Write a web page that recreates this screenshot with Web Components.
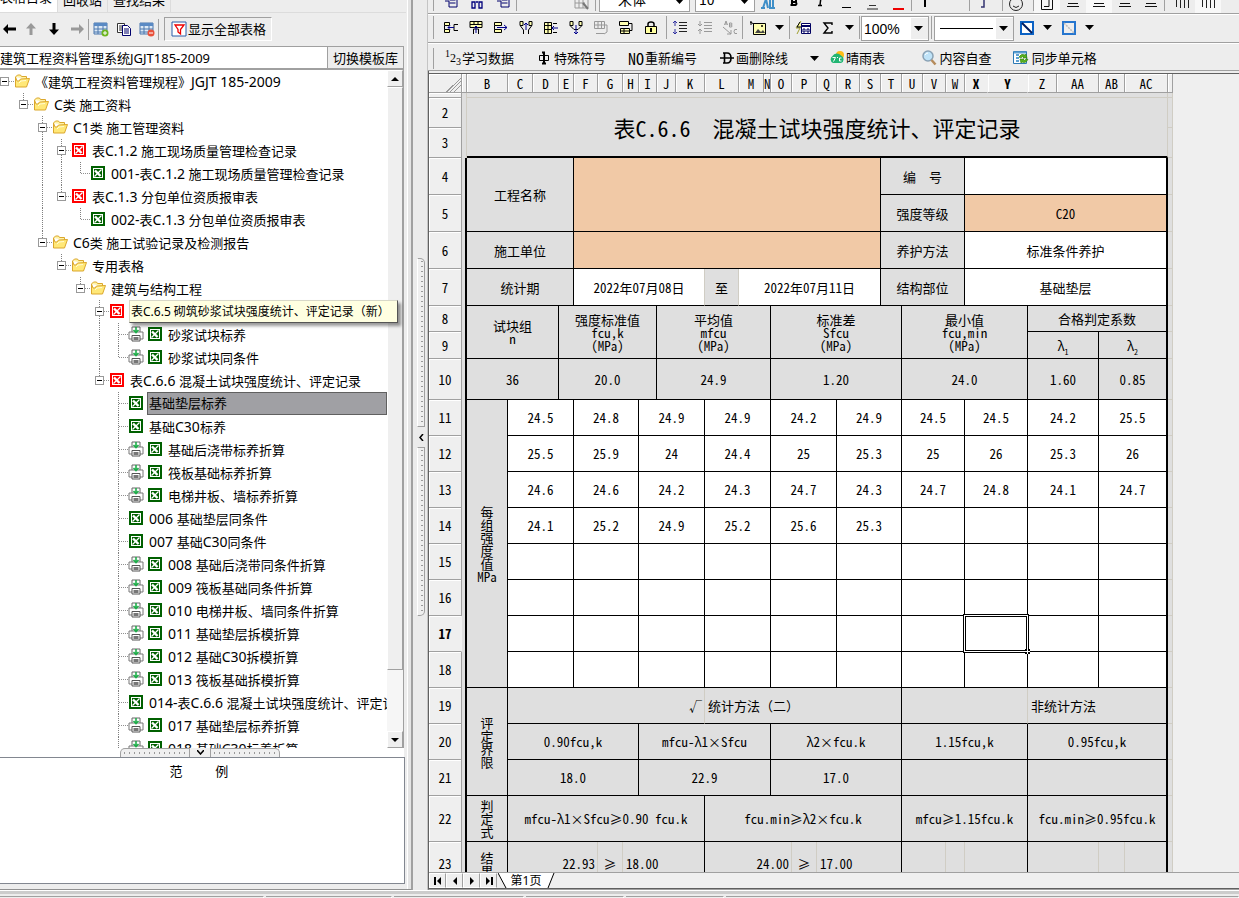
<!DOCTYPE html>
<html lang="zh-CN">
<head>
<meta charset="utf-8">
<title>建筑工程资料管理系统</title>
<style>
html, body { margin: 0; height: 100%; }
body {
  --face: #efefef; --line: #a0a0a0; --sheet: #dfdfdf;
  background: #ededed; color: #000; overflow: hidden;
  font: 13px/16px "Noto Sans", "Noto Sans CJK SC", sans-serif;
}
</style>
</head>
<body>
<app-shell></app-shell>
<script>
const ICONS = {
  left: '<path d="M1 8l5-5v3.500h8v3H6V13z" fill="#000"/>',
  up: '<path d="M8 2l5 5.500H9.500V14h-3V7.500H3z" fill="#999"/>',
  down: '<path d="M8 14l5-5.500H9.500V2h-3v6.500H3z" fill="#000"/>',
  right: '<path d="M15 8l-5-5v3.500H2v3h8V13z" fill="#999"/>',
  tadd: '<path d="M1 2h13v11H1z" fill="#dce9f6" stroke="#4a76ad"/><path d="M1 2h13v3H1z" fill="#5a8ac4"/><path d="M1 8h13M1 11h13M5 5v8M10 5v8" stroke="#4a76ad"/><circle cx="12" cy="12" r="3.500" fill="#6db51f"/><path d="M10 12h4M12 10v4" stroke="#fff"/>',
  tdel: '<path d="M1 2h13v11H1z" fill="#dce9f6" stroke="#4a76ad"/><path d="M1 2h13v3H1z" fill="#5a8ac4"/><path d="M1 8h13M1 11h13M5 5v8M10 5v8" stroke="#4a76ad"/><circle cx="12" cy="12" r="3.500" fill="#e8503a"/><path d="M10 12h4" stroke="#fff"/>',
  copy: '<path d="M1.500 2.500h7v9h-7z" fill="#fff" stroke="#333"/><path d="M3 5h4M3 7h3M3 9h3" stroke="#333"/><path d="M6.500 4.500h5l3 3v7h-8z" fill="#fff" stroke="#00006c"/><path d="M8 8h5M8 10h5M8 12h5" stroke="#00006c"/>',
  funnel: '<path d="M1 1h14v14H1z" fill="#fff" stroke="#2a5ca8"/><path d="M4 4h9l-3.500 4.500V13L7 11V8.500z" fill="none" stroke="#e00" stroke-width="1.300"/>',
  folder: '<path d="M1.500 4l2-2h3l1 1.500h5V6" fill="#fff3a6" stroke="#dba72c"/><path d="M1.500 4v10h11l3-8.500-9 .5-1.500 2H3z" fill="#ffe878" stroke="#dba72c"/><path d="M5 10l2-2 5-.500" fill="none" stroke="#fffbd4"/>',
  printer: '<path d="M4 6V1h8v5" fill="#fff" stroke="#666"/><path d="M1 6h14v7H1z" fill="#fff" stroke="#777"/><path d="M4 9.500h8V15H4z" fill="#fff" stroke="#555"/><path d="M5.500 12.500h5" stroke="#777" stroke-width="3"/><path d="M8 1v5M5.500 4L8 6.500 10.500 4" fill="none" stroke="#1fae4a" stroke-width="1.600"/>',
  i1: '<path d="M1.500 2.500h5v3h-5zM1.500 9.500h5v3h-5z" fill="#ffffb0" stroke="#000"/><path d="M1.500 5.500v4M15 4.500h-4v6h4" fill="none" stroke="#000"/><path d="M11 7.500H5M7 5.500l-2 2 2 2" fill="none" stroke="#00008b"/>',
  i2: '<path d="M2 1.500h12v6H2zM2 4.500h12M6 1.500v3M10 1.500v3" fill="#ffffb0" stroke="#000"/><path d="M5.500 14V9h5v5" fill="none" stroke="#000"/><path d="M8 13V6M6 8l2-2 2 2" fill="none" stroke="#00008b"/>',
  i3: '<path d="M1.500 2.500h7v3h-7zM1.500 9.500h7v3h-7z" fill="#ffffb0" stroke="#000"/><path d="M1.500 5.500v4" stroke="#000"/><path d="M4 7.500h10M11 5l3 2.500L11 10" fill="none" stroke="#00008b"/>',
  i4: '<path d="M2 1.500h3v4H2zM11 1.500h3v4h-3z" fill="#ffffb0" stroke="#000"/><path d="M5.500 14v-4l-3-4M10.500 14v-4l3-4" fill="none" stroke="#000"/><path d="M8 10V3M6 5l2-2 2 2" fill="none" stroke="#00008b"/>',
  i5: '<path d="M1.500 2.500h7v11h-7zM1.500 5.500h7M1.500 9.500h7M5 2.500v11" fill="#ffffb0" stroke="#000"/><path d="M10 3.500h4M10 12.500h4" stroke="#000"/><path d="M15 8H9M11 6L9 8l2 2" fill="none" stroke="#00008b"/>',
  i6: '<path d="M2 1.500h3v4H2zM11 1.500h3v4h-3z" fill="#ffffb0" stroke="#000"/><path d="M2 5.500l4 4h4l4-4" fill="none" stroke="#000"/><path d="M8 5v9M6 12l2 2 2-2" fill="none" stroke="#00008b"/>',
  i7: '<path d="M1.500 1.500h10v7h-10zM1.500 5h10M5 1.500v7M8.500 1.500v7" fill="none" stroke="#999"/><path d="M3 13.500h8M12 5h2v7l-3 2" fill="none" stroke="#999"/>',
  i8: '<path d="M1.500 1.500h9v4h-9zM2.500 8.500h9v5h-9z" fill="#ffffb0" stroke="#000"/><path d="M6 8.500v5M2.500 11h9M11 3.500h3v7h-2" fill="none" stroke="#000"/>',
  lock: '<path d="M5 7V4q0-2 3-2t3 2v3" fill="none" stroke="#000" stroke-width="1.500"/><path d="M2.500 6.500h11v7h-11z" fill="#ffffa0" stroke="#000"/><path d="M8 8v4" stroke="#000" stroke-width="2"/>',
  ls1: '<path d="M7 2.500h8M7 5.500h8M7 8.500h8M7 11.500h8" stroke="#222"/><path d="M3 1v5M1 3l2-2 2 2M3 9v5M1 12l2 2 2-2" fill="none" stroke="#3030a0"/>',
  ls2: '<path d="M7 2.500h8M7 5.500h8M7 8.500h8M7 11.500h8" stroke="#999"/><path d="M3 1v5M1 4l2 2 2-2M3 9v5M1 11l2-2 2 2" fill="none" stroke="#999"/>',
  abc: '<path d="M1 7l8 7M9 10v4H5" fill="none" stroke="#999"/><path d="M2.500 5L4 1l1.500 4M3 4h2M7.500 3v4h2q1-1 0-2 1-1 0-2zM7.500 5h2M15 9.500q-3-1-3 2t3 2" fill="none" stroke="#999"/>',
  pic: '<path d="M3.500 3.500h12v11h-12z" fill="#ffffb0" stroke="#000"/><path d="M5 13l3-4 3 3 2-2 2 3z" fill="#444"/><path d="M0 2l4 2M1 1v4" stroke="#000"/><circle cx="12" cy="6" r="1" fill="#000"/>',
  calc: '<path d="M6.500 3.500h9v10h-9z" fill="#fff" stroke="#000060"/><path d="M6.500 6h9" stroke="#000060" stroke-width="2"/><path d="M8 9h2v3H8zM12 9h2v3h-2z" fill="none" stroke="#000060"/><path d="M6 1L1 8h4l-3 6" fill="none" stroke="#a0a030"/><path d="M5 2L2 7h4" fill="#ffff90" stroke="#000"/>',
  sigma: '<path d="M12 5V3H4l4 5-4 5h8v-2" fill="none" stroke="#000" stroke-width="1.400"/>',
  diag1: '<path d="M2 2h12v12H2z" fill="#fff" stroke="#0b62c4" stroke-width="2"/><path d="M3 3l10 10" stroke="#001a5c" stroke-width="2"/>',
  diag2: '<path d="M2 2h12v12H2z" fill="#eee" stroke="#2676cf" stroke-width="2"/><path d="M3 3l10 10" stroke="#bbb" stroke-width="1.500" stroke-dasharray="2 1"/>',
  phi: '<path d="M3.500 5.500h9v5h-9z" fill="none" stroke="#000"/><path d="M8 2v12M6 2.500h3M6 13.500h4" stroke="#000" stroke-width="2"/>',
  strike: '<path d="M4 3h4q4 0 4 5t-4 5H4M5.500 3v10" fill="none" stroke="#000" stroke-width="1.600"/><path d="M1 8h14" stroke="#000" stroke-width="1.500"/>',
  weather: '<circle cx="11" cy="5" r="4" fill="#ffbd16"/><path d="M4 13a4 4 0 01-.500-7A5 4.500 0 0112 5.500 4 4 0 0112 13z" fill="#22b573"/><path d="M3.500 7.500h3l-2 4M8.500 7v1M12.500 8h-2v3h2" fill="none" stroke="#fff"/>',
  search: '<circle cx="7" cy="6" r="5" fill="#bfe3f8" stroke="#8aa2b5" stroke-width="1.500"/><path d="M4 5q1-2 3-2" stroke="#fff" fill="none"/><path d="M10.500 10l4 4.500" stroke="#b58b5c" stroke-width="2.500"/>',
  sync: '<path d="M.500 1.500h13v12H.500z" fill="#fff" stroke="#2d7ab5"/><path d="M1 2.500h12M3 5h3M3 8h3M3 11h3" stroke="#5da0d2" stroke-width="2"/><path d="M6 7q2-4 6-2l1-1 1 4h-4l1-1q-2-1-3 1zM15 9q-2 5-6 3l-1 1-1-4h4l-1 1q2 1 3-1z" fill="#58b31c" stroke="#2c7a0c" stroke-width=".6"/>',
  doc: '<path d="M2 4h4v6h8V2H4" fill="none" stroke="#00006c"/><path d="M6.500 3h6M6.500 6h6" stroke="#00006c"/>',
  bino: '<path d="M3 5h3v6H3zM10 5h3v6h-3zM7 5h2" fill="none" stroke="#00007c" stroke-width="1.300"/>',
  grid: '<path d="M1 2h13v9H1zM1 6h10M5 2v9M9 2v9" fill="none" stroke="#999"/><path d="M9 6l5 6" stroke="#777" stroke-width="2"/>',
  aa: '<path d="M1 11h4M3 11L6 2l2 9M9 11h6M10 11V2h3v9" fill="none" stroke="#3f8fc8" stroke-width="2"/>',
  bold: '<path d="M5 1h5v4H6M6 1v7M4.500 8h5q2-1 0-3" fill="none" stroke="#000" stroke-width="2"/>',
  ital: '<path d="M9 0L8 8M6 8.500h4" stroke="#000" stroke-width="1.500"/>',
  under: '<path d="M4 10.500h9" stroke="#000"/>',
  ugrey: '<path d="M3 12h11" stroke="#888" stroke-width="2"/><path d="M5 8.500h7" stroke="#333"/>',
  ured: '<path d="M3 12h11" stroke="#e00" stroke-width="2"/>',
  tick: '<path d="M8 2v8" stroke="#000" stroke-width="2"/>',
  hook: '<path d="M9 2v8H6" fill="none" stroke="#333370" stroke-width="1.500"/>',
  face: '<circle cx="8" cy="7" r="6.500" fill="none" stroke="#222"/><path d="M5 9q3 3 6 0" fill="none" stroke="#222"/>',
  box: '<path d="M2.500 2.500h11v10h-11zM5 9.500h5V3" fill="none" stroke="#111"/>',
  lines: '<path d="M3 6.500h10M2 9.500h12" stroke="#111"/>',
  comb: '<path d="M2.500 2v8M6.500 2v9M10.500 2v9M14.500 2v9" stroke="#222"/>'
};
const icon = (n, w = 16) => `<svg width="${w}" height="${w}" viewBox="0 0 16 16" aria-hidden="true">${ICONS[n]}</svg>`;
const TRI = '<svg class="tri" width="9" height="5" viewBox="0 0 9 5" aria-hidden="true"><path d="M0 0h9L4.500 5z"/></svg>';
/* Latin runs are set one pixel larger than the Chinese text beside them. */
const mix = s => s.replace(/[A-Za-z0-9.\-][A-Za-z0-9.\- ]*/g, m => `<span class="n">${m}</span>`);

function define(name, html) {
  const t = document.createElement('template');
  t.innerHTML = html;
  customElements.define(name, class extends HTMLElement {
    constructor() {
      super();
      this.attachShadow({ mode: 'open' }).append(t.content.cloneNode(true));
    }
  });
}
const BASE = `:host,*{box-sizing:border-box} svg{display:block;flex:none} button{font:inherit;color:inherit;background:none;border:0;padding:0;margin:0}.n{font-size:14px}`;

/* ---- left side ---- */
define('nav-tabs', `<style>${BASE}
:host{display:flex;align-items:flex-end;height:13px;overflow:hidden;border-bottom:1px solid #dcdcdc;flex:none}
button{height:26px;padding:4px 5px 2px;border-right:1px solid #dcdcdc;line-height:16px;white-space:nowrap}
button[aria-selected=true]{background:#fff;padding:0 5px 7px 0;margin-bottom:-1px}
</style><button role="tab" aria-selected="true">表格目录</button><button role="tab">回收站</button><button role="tab">查找结果</button>`);

define('nav-tools', `<style>${BASE}
:host{display:flex;align-items:center;height:33px;padding:0 0 1px 0;flex:none}
button{width:23px;display:flex;justify-content:center}
i{width:1px;height:21px;background:#a0a0a0}
.all{width:auto;margin-left:5px;height:24px;border:1px solid #a0a0a0;border-right-color:#fff;border-bottom-color:#fff;padding:0 5px 0 6px;align-items:center;gap:1px;white-space:nowrap}
</style><button style="width:19px" aria-label="后退">${icon('left')}</button><button aria-label="上移">${icon('up')}</button><button aria-label="下移">${icon('down')}</button><button aria-label="前进">${icon('right')}</button><i></i><button aria-label="新增">${icon('tadd')}</button><button aria-label="复制">${icon('copy')}</button><button aria-label="删除">${icon('tdel')}</button><i></i><button class="all">${icon('funnel')}<span>显示全部表格</span></button>`);

define('library-bar', `<style>${BASE}
:host{display:flex;height:23px;border:1px solid #a0a0a0;border-left:0;flex:none;margin:0 2px 0 0}
input{flex:1;min-width:0;border:0;padding:0;font:inherit;background:#fff;outline:0}
button{width:76px;border-left:1px solid #a0a0a0;white-space:nowrap}
</style><input aria-label="模板库" value="建筑工程资料管理系统JGJT185-2009"><button>切换模板库</button>`);

const TREE = [
  [0,'f','《建筑工程资料管理规程》JGJT 185-2009'],[1,'f','C类 施工资料'],[2,'f','C1类 施工管理资料'],
  [3,'r','表C.1.2 施工现场质量管理检查记录'],[4,'g','001-表C.1.2 施工现场质量管理检查记录'],
  [3,'r','表C.1.3 分包单位资质报审表'],[4,'g','002-表C.1.3 分包单位资质报审表'],
  [2,'f','C6类 施工试验记录及检测报告'],[3,'f','专用表格'],[4,'f','建筑与结构工程'],
  [5,'r',''],[6,'p','砂浆试块标养'],[6,'p','砂浆试块同条件'],
  [5,'r','表C.6.6 混凝土试块强度统计、评定记录'],[6,'s','基础垫层标养'],[6,'g','基础C30标养'],
  [6,'p','基础后浇带标养折算'],[6,'p','筏板基础标养折算'],[6,'p','电梯井板、墙标养折算'],
  [6,'g','006 基础垫层同条件'],[6,'g','007 基础C30同条件'],[6,'p','008 基础后浇带同条件折算'],
  [6,'p','009 筏板基础同条件折算'],[6,'p','010 电梯井板、墙同条件折算'],[6,'p','011 基础垫层拆模折算'],
  [6,'p','012 基础C30拆模折算'],[6,'p','013 筏板基础拆模折算'],
  [6,'g','014-表C.6.6 混凝土试块强度统计、评定记录'],[6,'p','017 基础垫层标养折算'],[6,'p','018 基础C30标养折算']
];
const follows = (i, l) => { for (let j = i + 1; j < TREE.length && TREE[j][0] >= l; j++) if (TREE[j][0] === l) return true; return false; };
const sheetIcon = c => `<svg class="x" width="14" height="14" viewBox="0 0 14 14" aria-hidden="true"><path d="M0 0h14v14H0z" fill="${c}"/><path d="M2 2h10v10H2z" fill="#fff"/><path d="M3 3h8v8H3z" fill="${c}"/><path d="M4 4.500l5.500 5.500" stroke="#fff" stroke-width="2.400"/><path d="M10.500 3.500L3.500 10.500" stroke="#fff" stroke-width="1.300"/></svg>`;
const treeRow = ([lv, k, text], i) => {
  let guides = '';
  for (let l = 0; l <= lv; l++) {
    const own = l === lv, next = follows(i, l);
    guides += `<span class="g${own && l ? ' top' : ''}${next ? ' down' : ''}${own ? ' own' : ''}">${own && 'fr'.includes(k) ? '<b></b>' : ''}</span>`;
  }
  const pic = k === 'f' ? icon('folder') : k === 'r' ? sheetIcon('#f00') : (k === 'p' ? icon('printer') : '') + sheetIcon('#006000');
  return `<li role="treeitem" class="${k}">${guides}<span class="pic">${pic}</span><span class="t">${mix(text)}</span></li>`;
};
define('tool-tip', `<style>:host{display:block;background:#ffffe1;border:1px solid #d8d8c8;border-right-color:#555;border-bottom-color:#555;box-shadow:3px 3px 3px #0006;padding:2px 7px 2px 1px;font-size:12px;line-height:17px;white-space:nowrap}</style><slot></slot>`);

define('doc-tree', `<style>${BASE}
:host{display:flex;flex:1;min-height:0;background:#fff;border:1px solid #a0a0a0;border-width:1px 1px 0 0;margin-right:2px;position:relative}
tool-tip{position:absolute;left:129px;top:230px;z-index:2}
.view{flex:1;min-width:0;overflow:hidden;position:relative}
ul{list-style:none;margin:0;padding:0;position:absolute;inset:0 0 0 0;overflow:hidden}
li{display:flex;align-items:center;height:23px;white-space:nowrap}
.g{width:19px;height:23px;flex:none;position:relative}
.g.top::before,.g.down::after{content:"";position:absolute;left:4px;border-left:1px dotted #808080;top:0;height:11px}
.g.down::after{height:23px}
.own{background:repeating-linear-gradient(90deg,#909090 0 1px,transparent 1px 2px) 5px 11px/9px 1px no-repeat}
.g b{position:absolute;z-index:1;left:0;top:7px;width:9px;height:9px;background:linear-gradient(#000,#000) center/5px 1px no-repeat #fff;border:1px solid #999}
.pic{display:flex;align-items:center;gap:3px;margin-left:-5px;min-width:21px;padding-bottom:1px}
.pic>.x:first-child{margin-left:1px}
.p .pic{min-width:40px}.p .pic .x{margin-left:1px}
.s .t{flex:1;background:#a0a0a4;border:1px solid #606060;height:23px;line-height:21px;margin-left:-2px;padding-left:1px}
.bar{width:16px;display:flex;flex-direction:column;background:#f6f6f6;flex:none}
.bar button,.bar div{background:#efefef;border:1px solid #fff;border-right-color:#a0a0a0;border-bottom-color:#a0a0a0}
.bar button{height:17px;display:flex;align-items:center;justify-content:center}
.bar div{flex:583}.bar span{flex:61}
</style><div class="view"><ul role="tree">${TREE.map(treeRow).join('')}</ul></div>
<div class="bar"><button aria-label="向上滚动"><svg width="8" height="4" viewBox="0 0 8 4"><path d="M0 4l4-4 4 4z"/></svg></button><div></div><span></span><button aria-label="向下滚动"><svg width="8" height="4" viewBox="0 0 8 4"><path d="M0 0l4 4 4-4z"/></svg></button></div>
<tool-tip>表C.6.5 砌筑砂浆试块强度统计、评定记录（新）</tool-tip>`);

define('pane-handle', `<style>${BASE}
:host{display:flex;height:9px;background:#fff;padding-left:120px;margin-right:2px;flex:none}
i{width:70px;background:radial-gradient(circle,#999 1px,transparent 1px) 1px 1px/5px 6px,#efefef;border:1px solid #a0a0a0;border-bottom:0;border-radius:5px 0 0 0}
i:last-child{border-radius:0 5px 0 0}
button{width:20px;display:flex;justify-content:center;align-items:center;background:#efefef}
</style><i></i><button aria-label="折叠"><svg width="7" height="5" viewBox="0 0 7 5"><path d="M0 0l3.500 4L7 0" fill="none" stroke="#000" stroke-width="1.500"/></svg></button><i></i>`);

define('example-pane', `<style>:host{display:block;height:127px;box-sizing:border-box;background:#fff;border:1px solid #828790;border-left:0;margin:0 1px 5px 0;flex:none;text-align:center;padding:5px 6px 0 0;white-space:pre}</style><slot></slot>`);

define('nav-panel', `<style>${BASE}
:host{display:flex;flex-direction:column;width:412px;flex:none;padding-right:5px;border-right:1px solid #a0a0a0;box-shadow:inset -3px 0 #e4e4e4,inset -4px 0 #fff;border-bottom:1px solid #909090}
</style><nav-tabs></nav-tabs><nav-tools></nav-tools><library-bar></library-bar><doc-tree></doc-tree><pane-handle></pane-handle><example-pane>范　　&nbsp;&nbsp;例</example-pane>`);

define('side-handle', `<style>${BASE}
:host{display:flex;flex-direction:column;width:16px;flex:none;padding:258px 3px 0 4px;border-left:1px solid #a0a0a0;background:#ebebeb;border-right:1px solid #c4c4c4}
i{height:169px;width:8px;background:radial-gradient(circle,#999 1px,transparent 1px) 0 0/8px 5px,#efefef;border:1px solid #a0a0a0;border-left-color:#fff;border-radius:0 5px 0 0}
i:last-child{border-radius:0 0 5px 0}
button{height:20px;width:8px;display:flex;align-items:center;justify-content:center}
</style><i></i><button aria-label="折叠左栏"><svg width="5" height="7" viewBox="0 0 5 7"><path d="M4 0L1 3.500 4 7" fill="none" stroke="#000" stroke-width="1.500"/></svg></button><i></i>`);

/* ---- right side tool bars ---- */
const tb = n => `<button aria-label="${n}">${icon(n)}</button>`;
define('format-bar', `<style>${BASE}
:host{display:flex;align-items:flex-end;height:14px;overflow:hidden;border-bottom:1px solid #a0a0a0;flex:none;padding-left:5px}
i{width:1px;height:14px;background:#a0a0a0;flex:none;margin-bottom:2px}
button{width:26px;flex:none;height:16px;display:flex;justify-content:center}
button.on{background:#f8f8f8}
.c{display:flex;border:1px solid #a0a0a0;background:#fff;height:24px;margin-bottom:1px;flex:none}
select{appearance:none;border:0;background:#fff;font:14px "Noto Sans CJK SC",sans-serif;width:100%;height:20px;padding:0 0 0 18px;margin:0;line-height:16px}
.z{padding-left:3px}
.tri{align-self:flex-end;margin:0 5px 7px 0}
</style><i></i><span style="width:4px"></span>${tb('doc')}${tb('bino')}${tb('doc')}<i></i><span style="flex:0 0 52px"></span>${tb('grid')}<i style="margin-right:3px"></i><span class="c" style="width:91px"><select aria-label="字体"><option>宋体</option></select>${TRI}</span><span class="c" style="width:60px;margin-left:5px"><select class="z" aria-label="字号"><option>10</option></select>${TRI}</span>${tb('aa')}${tb('bold')}${tb('ital')}${tb('under')}${tb('ugrey')}${tb('ured')}<i></i>${tb('tick')}<span style="flex:0 0 31px"></span><i></i>${tb('hook')}<span style="width:6px"></span><i></i>${tb('face')}<span style="width:4px"></span><i></i><button class="on" aria-label="box">${icon('box')}</button>${tb('lines')}<button class="on" aria-label="center">${icon('lines')}</button>${tb('lines')}${tb('lines')}<i></i><span style="width:4px"></span>${tb('comb')}<button class="on" aria-label="comb">${icon('comb')}</button>`);

define('cell-bar', `<style>${BASE}
:host{display:flex;align-items:center;height:29px;border-top:1px solid #fff;border-bottom:1px solid #a0a0a0;flex:none;padding:0 0 2px 5px}
i{width:1px;height:23px;background:#a0a0a0;flex:none}
button{width:25px;flex:none;display:flex;justify-content:center}
.lead{margin-left:4px}
.c{display:flex;align-items:center;border:1px solid #a0a0a0;background:#fff;height:25px;position:relative;flex:none;margin-top:2px}
select{appearance:none;border:0;background:transparent;font:14px "Liberation Sans",sans-serif;width:100%;padding:0 0 0 2px;margin:0}
.c .tri{margin-right:5px}.c::after{content:"";position:absolute;right:0;top:1px;bottom:1px;width:17px;background:#0001}
.rule{position:absolute;left:5px;width:53px;height:1px;background:#000}
.m{width:19px}
</style><i></i><span class="lead"></span>${['i1','i2','i3','i4','i5','i6','i7','i8','lock'].map(tb).join('')}<i style="margin-left:3px"></i>${tb('ls1')}${tb('ls2')}${tb('abc')}<i></i><span style="width:2px"></span>${tb('pic')}<button class="m" aria-label="图片选项">${TRI}</button><i></i>${tb('calc')}${tb('sigma')}<button class="m" aria-label="求和选项">${TRI}</button><i style="margin-right:1px"></i><span class="c" style="width:68px"><select aria-label="缩放"><option>100%</option></select>${TRI}</span><i style="margin:0 2px"></i><span class="c" style="width:80px"><select aria-label="线型"><option></option></select><span class="rule"></span>${TRI}</span>${tb('diag1')}<button style="width:17px" aria-label="斜线选项">${TRI}</button>${tb('diag2')}<button style="width:17px" aria-label="边框选项">${TRI}</button>`);

define('task-bar', `<style>${BASE}
:host{display:flex;align-items:center;height:28px;border-top:1px solid #fff;border-bottom:1px solid #a0a0a0;flex:none;padding:2px 0 0 5px;white-space:nowrap}
i{width:1px;height:21px;background:#a0a0a0;margin-right:11px}
button{display:flex;align-items:center;gap:1px;margin-right:22px}
.no{font:16px "Noto Sans Mono CJK SC",monospace;line-height:16px;width:17px;text-align:left}
.num{font:12px "Liberation Serif",serif;width:16px}
sup,sub{font-size:10px;line-height:0}
</style><i></i><button><span class="num"><sup>1</sup>2<sub>3</sub></span>学习数据</button><button style="gap:2px">${icon('phi')}特殊符号</button><button style="gap:0"><span class="no">NO</span>重新编号</button><button>${icon('strike')}画删除线</button><button style="margin-right:10px" aria-label="更多">${TRI}</button><button style="margin-right:36px">${icon('weather')}晴雨表</button><button>${icon('search')}&#8202;内容自查</button><button>${icon('sync')}&#8202;同步单元格</button>`);

/* ---- spreadsheet ---- */
const COLS = {A:5,B:41,C:25,D:26,E:15,F:24,G:25,H:16,I:18,J:19,K:29,L:34,M:25,N:7,O:21,P:25,Q:20,R:23,S:21,T:21,U:21,V:23,W:19,X:23,Y:40,Z:29,AA:42,AB:26,AC:43,AD:5};
const W = 'w', O = 'o';
const val = (...v) => v.map((t, i) => [t, i < 7 ? 3 : 2, 1, W]);
/* each cell: text, columns, rows, classes */
const ROWS = [
  [1,5,[['',28,1,'l']]],
  [2,30,[['表<span>C.6.6&nbsp; </span>混凝土试块强度统计、评定记录',28,2,'title']]],
  [3,30,[]],
  [4,37,[['工程名称',4,2],['',14,2,O],['编　号',4],['',6,1,W]]],
  [5,37,[['强度等级',4],['C20',6,1,O]]],
  [6,37,[['施工单位',4],['',14,1,O],['养护方法',4],['标准条件养护',6,1,W]]],
  [7,37,[['统计期',4],['2022年07月08日',6,1,'w l'],['至',1,1,'l'],['2022年07月11日',7,1,W],['结构部位',4],['基础垫层',6,1,W]]],
  [8,26,[['试块组<br>n',3,2],['强度标准值<br>fcu,k<br>(MPa)',5,2],['平均值<br>mfcu<br>(MPa)',5,2],['标准差<br>Sfcu<br>(MPa)',6,2],['最小值<br>fcu,min<br>(MPa)',5,2],['合格判定系数',4]]],
  [9,27,[['λ<sub>1</sub>',2],['λ<sub>2</sub>',2]]],
  [10,41,[['36',3],['20.0',5],['24.9',5],['1.20',6],['24.0',5],['1.60',2],['0.85',2]]],
  [11,36,[['每<br>组<br>强<br>度<br>值<br>MPa',1,8],...val('24.5','24.8','24.9','24.9','24.2','24.9','24.5','24.5','24.2','25.5')]],
  [12,36,val('25.5','25.9','24','24.4','25','25.3','25','26','25.3','26')],
  [13,36,val('24.6','24.6','24.2','24.3','24.7','24.3','24.7','24.8','24.1','24.7')],
  [14,36,val('24.1','25.2','24.9','25.2','25.6','25.3','','','','')],
  [15,36,val('','','','','','','','','','')],
  [16,36,val('','','','','','','','','','')],
  [17,36,val('','','','','','','','<b class="cursor"></b>','','')],
  [18,36,val('','','','','','','','','','')],
  [19,36,[['评<br>定<br>界<br>限',1,3],['√',9,1,'l end'],['统计方法（二）',9,1,'start'],['',5,1,'l'],['非统计方法',4,1,'start']]],
  [20,36,[['0.90fcu,k',6],['mfcu-λ1×Sfcu',6],['λ2×fcu.k',6],['1.15fcu,k',5],['0.95fcu,k',4]]],
  [21,36,[['18.0',6],['22.9',6],['17.0',6],['',5],['',4]]],
  [22,46,[['判<br>定<br>式'],['mfcu-λ1×Sfcu≥0.90 fcu.k',9],['fcu.min≥λ2×fcu.k',9],['mfcu≥1.15fcu.k',5],['fcu.min≥0.95fcu.k',4]]],
  [23,44,[['结<br>果'],['22.93',4,1,'l end'],['≥',1,1,'l'],['18.00',4,1,'start'],['24.00',4,1,'l end'],['≥',1,1,'l'],['17.00',4,1,'start'],['',2,1,'l'],['',1,1,'l'],['',2],['',2,1,'l'],['',1,1,'l'],['',1]]]
];
const names = Object.keys(COLS);
const head = names.map(n => `<th scope="col"${'XY'.includes(n) ? ' class="act"' : ''}>${n === 'A' || n === 'AD' ? '' : n}</th>`).join('');
const rows = ROWS.map(([n, h, cells]) => `<tr style="height:${h}px"><th scope="row"${n === 17 ? ' class="act"' : ''}>${n === 1 ? '' : n}</th><td class="${n > 3 ? 'edge' : 'a'}"></td>${
  cells.map(([t, c = 1, r = 1, k = '']) => `<td colspan="${c}" rowspan="${r}" class="${k}">${t}</td>`).join('')}<td class="z"></td></tr>`).join('');

define('sheet-grid', `<style>${BASE}
:host{display:block;flex:1;min-height:0;overflow:hidden;background:#efefef;border-top:1px solid #606060;margin-top:2px}
table{table-layout:fixed;width:744px;border-collapse:separate;border-spacing:0;font:13px/13px "Noto Sans Mono CJK SC","Noto Sans CJK SC",monospace}
td,th{padding:0;border:0 solid #000;border-width:0 1px 1px 0;text-align:center;vertical-align:middle;background:var(--sheet);white-space:nowrap;overflow:hidden;font-weight:400;position:relative}
thead tr{height:19px}
th{background:#efefef;border-color:#a0a0a0;box-shadow:inset 1px 1px #fff}
th.act{font-weight:700;border-right-color:#efefef}
thead th:first-child{background:linear-gradient(135deg,transparent 50%,#999 50% 54%,transparent 54% 62%,#999 62% 66%,transparent 66% 74%,#999 74% 78%,transparent 78%) right bottom/16px 14px no-repeat #efefef}
.w{background:#fff}.o{background:#f1c9a6}
.l{border-right-color:#d0cdc4}
tr:first-child>td{border-bottom-color:#d0cdc4}
td.a{border-color:#d0cdc4;border-bottom:0}
td.edge{border-right-width:2px;border-bottom:0}
td.z{border-color:#d0cdc4}
td.title{font-size:22px;line-height:26px;border-bottom-width:2px;border-right-color:#d0cdc4}
tr>td:nth-last-child(2):not(.a):not(.edge):not(.l):not(.title){border-right-width:2px}
.end{text-align:right;padding-right:2px}.start{text-align:left;padding-left:3px}
sub{font-size:8px;line-height:0}
td:has(.cursor){overflow:visible}
.cursor{position:absolute;z-index:1;inset:-2px;border:1px solid #000;box-shadow:inset 0 0 0 1px #fff,inset 0 0 0 2px #000}
.cursor::after{content:"";position:absolute;right:-2px;bottom:-2px;width:5px;height:5px;background:linear-gradient(#fff,#fff) center/5px 1px no-repeat,linear-gradient(#fff,#fff) center/1px 5px no-repeat #000}
</style><table><colgroup><col style="width:33px">${names.map(n => `<col style="width:${COLS[n]}px">`).join('')}</colgroup><thead><tr><th></th>${head}</tr></thead><tbody>${rows}</tbody></table>`);

const nav = (label, d) => `<button aria-label="${label}"><svg width="8" height="8" viewBox="0 0 8 8"><path d="${d}"/></svg></button>`;
define('sheet-tabs', `<style>${BASE}
:host{display:flex;height:17px;border-top:1px solid #a0a0a0;border-bottom:1px solid #606060;background:#efefef;flex:none}
button{width:17px;border:1px solid #fff;border-right-color:#a0a0a0;display:flex;align-items:center;justify-content:center}
a{color:inherit;text-decoration:none;width:56px;margin-left:1px;text-align:center;font-size:12px;line-height:15px;background:#fff;clip-path:polygon(0 0,100% 0,50px 100%,8px 100%)}
.tab{position:relative;display:flex}
.tab svg{position:absolute;left:1px;top:0}
</style>${nav('第一页','M0 0h2v8H0zM7 0v8L3 4z')}${nav('上一页','M6 0v8L2 4z')}${nav('下一页','M2 0v8l4-4z')}${nav('最后一页','M6 0h2v8H6zM1 0v8l4-4z')}<span class="tab"><a href="#p1">第1页</a><svg width="58" height="15" viewBox="0 0 58 15" aria-hidden="true"><path d="M0 0l8 15M56 0l-6 15" stroke="#000" fill="none"/></svg></span>`);

define('sheet-panel', `<style>${BASE}
:host{display:flex;flex-direction:column;flex:1;min-width:0}
.frame{display:flex;flex-direction:column;flex:1;min-height:0;border-left:1px solid #606060;border-bottom:1px solid #a0a0a0}
</style><format-bar></format-bar><cell-bar></cell-bar><task-bar></task-bar><div class="frame"><sheet-grid></sheet-grid><sheet-tabs></sheet-tabs></div>`);

define('status-strip', `<style>${BASE}
:host{display:flex;gap:2px;height:8px;border-top:1px solid #fff;box-shadow:inset 0 3px #ccc;padding-top:5px;flex:none}
span{border-top:1px solid #a0a0a0;border-right:1px solid #fff;flex:none}
span:last-child{flex:1}
</style><span style="width:264px"></span><span style="width:126px"></span><span style="width:130px"></span><span style="width:98px"></span><span style="width:98px"></span><span></span>`);

define('app-shell', `<style>:host{display:flex;flex-direction:column;height:100vh;overflow:hidden}
main{display:flex;flex:1;min-height:0}</style><main><nav-panel></nav-panel><side-handle></side-handle><sheet-panel></sheet-panel></main><status-strip></status-strip>`);
</script>
</body>
</html>
